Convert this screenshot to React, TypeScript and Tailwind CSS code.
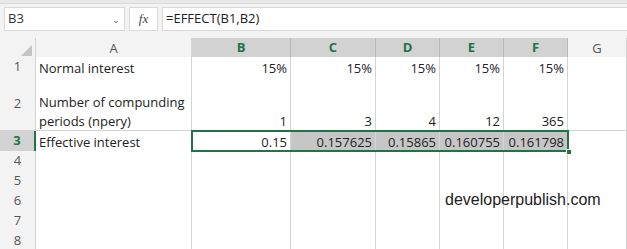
import React from 'react';

const COLS = ['A', 'B', 'C', 'D', 'E', 'F', 'G'];
const SELECTED_COLS = ['B', 'C', 'D', 'E', 'F'];

interface Row {
  n: number;
  h: string;
  cells: string[];
}

const rows: Row[] = [
  { n: 1, h: 'h-[20px]', cells: ['Normal interest', '15%', '15%', '15%', '15%', '15%', ''] },
  { n: 2, h: 'h-[54px]', cells: ['Number of compunding periods (npery)', '1', '3', '4', '12', '365', ''] },
  { n: 3, h: 'h-[20px]', cells: ['Effective interest', '0.15', '0.157625', '0.15865', '0.160755', '0.161798', ''] },
  { n: 4, h: 'h-[20px]', cells: ['', '', '', '', '', '', ''] },
  { n: 5, h: 'h-[20px]', cells: ['', '', '', '', '', '', ''] },
  { n: 6, h: 'h-[20px]', cells: ['', '', '', '', '', '', ''] },
  { n: 7, h: 'h-[20px]', cells: ['', '', '', '', '', '', ''] },
  { n: 8, h: 'h-[20px]', cells: ['', '', '', '', '', '', ''] },
];

const gridCols = 'grid grid-cols-[36px_156px_99px_85px_64px_64px_64px_1fr]';

const App: React.FC = () => {
  return (
    <div className="w-[627px] h-[249px] overflow-hidden bg-white font-['Open_Sans',sans-serif] text-[#222]">
      {/* top strip */}
      <div className="h-[4px] bg-[#e9e9e9] border-b border-[#dadada]" />

      {/* formula bar */}
      <div className="h-[34px] bg-[#f3f3f3] flex items-start pt-[3px] pl-[4px] gap-[4px]">
        <div className="w-[121px] h-[24px] bg-white border border-[#dadada] flex items-center justify-between pl-[3px] pr-[4px] text-[13px] text-[#333]">
          <span>B3</span>
          <span className="text-[9px] text-[#666] leading-none">⌄</span>
        </div>
        <div className="w-[29px] h-[24px] bg-white border border-[#dadada] flex items-center justify-center font-['Liberation_Serif',serif] italic text-[13px] text-[#444]">
          fx
        </div>
        <div className="flex-1 h-[24px] bg-white border-l border-y border-[#dadada] flex items-center pl-[3px] text-[13px] text-[#222]">
          =EFFECT(B1,B2)
        </div>
      </div>

      {/* column headers */}
      <div className={`${gridCols} h-[19px]`}>
        <div className="relative bg-[#f3f3f3] border-r border-b border-[#d4d4d4]">
          <svg className="absolute right-[3px] bottom-[3px]" width="11" height="11" viewBox="0 0 11 11">
            <polygon points="11,0 11,11 0,11" fill="#c4c4c4" />
          </svg>
        </div>
        {COLS.map((c) => {
          const sel = SELECTED_COLS.includes(c);
          return (
            <div
              key={c}
              className={
                sel
                  ? 'bg-[#d2d2d2] border-r border-[#b9b9b9] border-b-2 border-b-[#217346] flex items-center justify-center text-[13px] font-bold text-[#217346]'
                  : 'bg-[#f3f3f3] border-r border-b border-[#d4d4d4] flex items-center justify-center text-[13px] text-[#555]'
              }
            >
              {c}
            </div>
          );
        })}
      </div>

      {/* body */}
      <div className="relative">
        {rows.map((r) => (
          <div key={r.n} className={`${gridCols} ${r.h}`}>
            <div
              className={
                r.n === 3
                  ? 'bg-[#d2d2d2] border-r-2 border-r-[#217346] border-b border-[#b9b9b9] flex items-center justify-center text-[13px] font-bold text-[#217346]'
                  : 'bg-[#f3f3f3] border-r border-b border-[#d4d4d4] flex items-center justify-center text-[13px] text-[#555]'
              }
            >
              {r.n}
            </div>
            {r.cells.map((v, i) => {
              const isText = i === 0;
              const shaded = r.n === 3 && i >= 2 && i <= 5;
              return (
                <div
                  key={i}
                  className={`border-r border-b border-[#d4d4d4] flex items-end text-[13px] leading-[19px] ${
                    isText ? 'justify-start pl-[3px]' : 'justify-end pr-[3px]'
                  } ${shaded ? 'bg-[#c6c6c6]' : 'bg-white'}`}
                >
                  <span className="block translate-y-[1px]">{v}</span>
                </div>
              );
            })}
          </div>
        ))}

        {/* selection range B3:F3 */}
        <div className="absolute left-[191px] top-[73px] w-[378px] h-[22px] border-2 border-[#217346] pointer-events-none" />
        <div className="absolute left-[566px] top-[92px] w-[6px] h-[6px] bg-[#217346] border border-white" />

        {/* watermark */}
        <div className="absolute left-[445px] top-[134px] font-['Liberation_Sans',sans-serif] text-[16px] leading-[18px] text-[#222]">
          developerpublish.com
        </div>
      </div>
    </div>
  );
};

export default App;
